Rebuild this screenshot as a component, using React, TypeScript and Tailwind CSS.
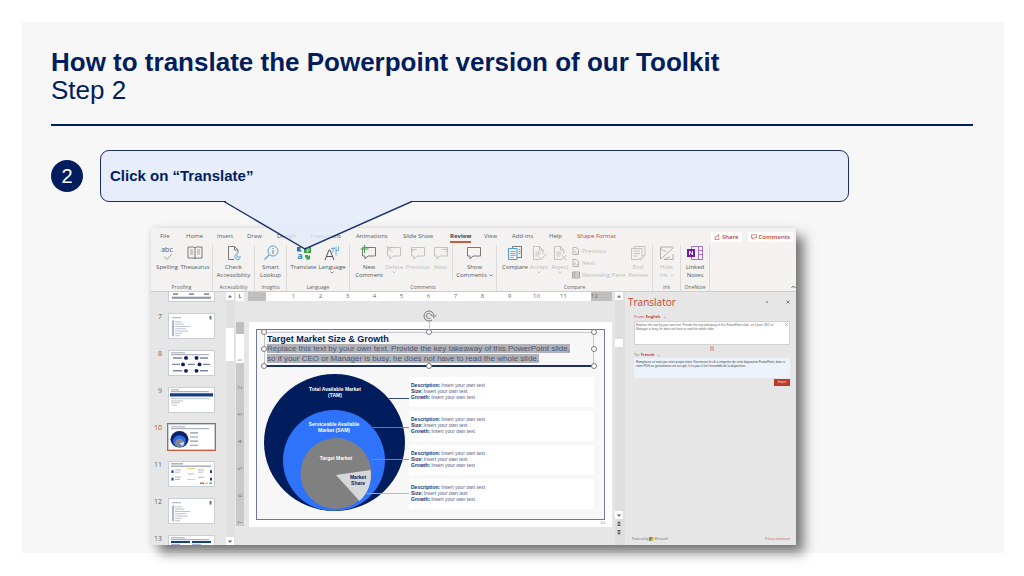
import type { ReactNode } from "react";

const grey = "#6b6b6b";
const faint = "#bdbdbd";

const Svg = ({ children, w = 16, h = 16 }: { children: ReactNode; w?: number; h?: number }) => (
  <svg width={w} height={h} viewBox={`0 0 ${w} ${h}`} fill="none" className="shrink-0 overflow-visible" aria-hidden="true">
    {children}
  </svg>
);

const SpellingIcon = () => (
  <Svg>
    <path d="M5 11.500l3 3 5-5.500" stroke="#9a9a9a" strokeWidth="0.9" />
    <text x="8" y="7" textAnchor="middle" fontSize="7" fill="#555" fontFamily="Open Sans, sans-serif">abc</text>
  </Svg>
);
const ThesaurusIcon = () => (
  <Svg>
    <path d="M1 2h6l1 1 1-1h6v11H9l-1 1-1-1H1z M8 3v11" stroke={grey} strokeWidth="0.9" />
    <path d="M3 5h3M3 7h3M3 9h3M10 5h3M10 7h3" stroke="#8a8a8a" strokeWidth="0.8" />
    <path d="M10 9h3" stroke="#d9826a" strokeWidth="0.8" />
  </Svg>
);
const CheckIcon = () => (
  <Svg>
    <path d="M8 14.500H2.500V1.500h6l3.500 3.500v3 M8.500 1.500V5H12" stroke={grey} strokeWidth="0.9" />
    <path d="M11 8v4h4 M9.500 9.500a3 3 0 1 0 4.500 4" stroke="#5aa7dd" strokeWidth="1" />
  </Svg>
);
const SmartIcon = () => (
  <Svg>
    <circle cx="10" cy="6" r="5" stroke="#5aa7dd" strokeWidth="1" />
    <path d="M6.500 9.500L1.500 14.500" stroke="#5aa7dd" strokeWidth="1.200" />
    <path d="M10 5v4M10 3v1" stroke={grey} strokeWidth="0.9" />
  </Svg>
);
const TranslateIcon = () => (
  <Svg>
    <path d="M1 2h4v1.500H3.500L6 6.500H1z" fill="#2b6fb5" />
    <text x="4" y="14" textAnchor="middle" fontSize="9" fontWeight="700" fill="#2b86c9" fontFamily="Open Sans, sans-serif">a</text>
    <path d="M8 2h7v6H8z" fill="#3b9e3f" />
    <path d="M9.500 4h4M11.500 3v3.500M10 6.500c2 0 3.500-1 3.500-2" stroke="#e2f2e0" strokeWidth="0.7" />
    <path d="M9 10h3v1.500l2-1.500v4.500H9.500l1.500-2H9z" fill="#3b9e3f" />
  </Svg>
);
const LanguageIcon = () => (
  <Svg>
    <path d="M1 15L5 5h1l4 10M2.500 11.500h6" stroke="#555" strokeWidth="1" />
    <path d="M7 3.500h4M9 2v4.500L7.500 8M12 1.500v9M12 5.500h2.500V1.500" stroke="#5aa7dd" strokeWidth="0.9" />
  </Svg>
);
const Bubble = ({ kind }: { kind: "new" | "delete" | "previous" | "next" | "show" }) => {
  const c = kind === "new" || kind === "show" ? grey : faint;
  return (
    <Svg>
      <path d="M1.500 2.500h13v8.500H7l-3 3v-3H1.500z" stroke={c} strokeWidth="0.9" />
      {kind === "new" && <path d="M3.500 0v8M-0.500 4h8" stroke="#4aa555" strokeWidth="1.200" />}
      {kind === "delete" && <path d="M0.500 1l6 6M6.500 1l-6 6" stroke={c} strokeWidth="0.9" />}
      {kind === "previous" && <path d="M7 4.500H1M3.500 2L1 4.500 3.500 7" stroke={c} strokeWidth="0.9" />}
      {kind === "next" && <path d="M9 4.500h6M12.500 2L15 4.500 12.500 7" stroke={c} strokeWidth="0.9" />}
    </Svg>
  );
};
const CompareIcon = () => (
  <Svg>
    <path d="M5.500 1.500h9v11h-9z" stroke={grey} strokeWidth="0.9" />
    <path d="M1.500 3.500h8.500v11H1.500z" fill="#f3f2f1" stroke="#4a9bd8" strokeWidth="1" />
    <path d="M3.500 6.500h5M3.500 8.500h5M3.500 10.500h5M3.500 12.500h3" stroke="#4a9bd8" strokeWidth="0.8" />
    <path d="M11.500 4.500h2M11.500 6.500h2M11.500 8.500h2" stroke={grey} strokeWidth="0.7" />
  </Svg>
);
const PageIcon = ({ mark }: { mark: string }) => (
  <Svg>
    <path d="M9 14.500H2.500V1.500h6l3.500 3.500v4M8.500 1.500V5H12M4.500 7h5M4.500 9h5M4.500 11h3" stroke={faint} strokeWidth="0.9" />
    <path d={mark} stroke={faint} strokeWidth="1" />
  </Svg>
);
const EndReviewIcon = () => (
  <Svg>
    <path d="M4 3V1.500h11v9h-2M1.500 3.500H12v8l-3 3H1.500zM3.500 6h6.500M3.500 8.500h6.500M3.500 11h4" stroke={faint} strokeWidth="0.9" />
    <path d="M9 13l2 2 3.500-4" stroke={faint} strokeWidth="0.9" />
  </Svg>
);
const InkIcon = () => (
  <Svg>
    <path d="M1.500 14V2h13M2 14L14 3M2 3c2 5 4 1 5 4M14 9v5.500H5c3-1 4-3 6-2" stroke="#a9a9a9" strokeWidth="0.9" />
  </Svg>
);
const OneNoteIcon = () => (
  <Svg w={18}>
    <path d="M5.500 1.500h11v13h-11zM12.500 1.500v13M12.500 5.500h4M12.500 9.500h4" stroke="#9a63c8" strokeWidth="0.9" />
    <rect x="1" y="4" width="8" height="8" fill="#7719aa" />
    <path d="M3.500 10V6l3 4V6" stroke="#fff" strokeWidth="1" />
  </Svg>
);

const Tool = ({ icon, lines, dim, drop }: { icon: ReactNode; lines: string[]; dim?: boolean; drop?: boolean }) => (
  <button
    className={`flex flex-col items-center whitespace-nowrap text-[6px] leading-[8px] ${dim ? "text-[#bcbcbc]" : "text-[#555]"}`}
  >
    {icon}
    <span className="mt-[2px]">{lines[0]}</span>
    <span className="flex items-center gap-[2px]">
      {lines[1]}
      {drop && (
        <svg width="4" height="3" viewBox="0 0 4 3" aria-hidden="true">
          <path d="M0.500 0.500l1.500 1.500 1.500-1.500" fill="none" stroke="currentColor" strokeWidth="0.7" />
        </svg>
      )}
    </span>
  </button>
);

const Group = ({ label, cols, children }: { label: string; cols: string; children: ReactNode }) => (
  <div className="flex flex-col justify-between border-r border-[#dcdad8]">
    <div className={`grid items-start ${cols}`}>{children}</div>
    <div className="text-center text-[5px] leading-[8px] whitespace-nowrap text-[#666]">{label}</div>
  </div>
);

const tabs = ["File", "Home", "Insert", "Draw", "Design", "Transitions", "Animations", "Slide Show", "Review", "View", "Add-ins", "Help", "Shape Format"];

const tabStyle = (t: string) =>
  t === "Review"
    ? "font-bold text-[#444] border-[#c75b3f]"
    : t === "Shape Format"
      ? "text-[#c2452d] border-transparent"
      : "text-[#5a5a5a] border-transparent";

const Ribbon = () => (
  <div className="border-b border-[#cfcdcb] bg-[#f3f2f1]">
    <div className="flex h-[17px] items-center justify-between pr-[3px]">
      <nav className="grid grid-cols-[26px_31px_30px_30px_33px_46px_47px_47px_34px_28px_37px_28px_50px] pl-[9px]">
        {tabs.map((t) => (
          <div key={t} className="flex">
            <button className={`border-b-2 pt-[2px] text-[6px] leading-[9px] whitespace-nowrap ${tabStyle(t)}`}>{t}</button>
          </div>
        ))}
      </nav>
      <div className="flex gap-[6px] text-[6px] leading-[10px] font-semibold text-[#b8432f]">
        <button className="flex items-center gap-[2px] rounded-[1px] bg-white px-[3px]">
          <svg width="6" height="6" viewBox="0 0 6 6" fill="none" stroke="currentColor" strokeWidth="0.6" aria-hidden="true">
            <path d="M1 2.500v3h4v-2M2 4c0-2 1-2.500 3-2.500M3.800 0.300L5.200 1.500 3.800 2.700" />
          </svg>
          Share
        </button>
        <button className="flex items-center gap-[2px] rounded-[1px] bg-white px-[3px]">
          <svg width="6" height="6" viewBox="0 0 6 6" fill="none" stroke="currentColor" strokeWidth="0.6" aria-hidden="true">
            <path d="M0.500 0.800h5v3h-2.500l-1.200 1.400v-1.400h-1.300z" />
          </svg>
          Comments
        </button>
      </div>
    </div>
    <div className="grid h-[46px] grid-cols-[62px_42px_32px_63px_147px_156px_28px_29px_1fr]">
      <Group label="Proofing" cols="grid-cols-[30px_26px] pl-[1px]">
        <Tool icon={<SpellingIcon />} lines={["Spelling"]} />
        <Tool icon={<ThesaurusIcon />} lines={["Thesaurus"]} />
      </Group>
      <Group label="Accessibility" cols="grid-cols-1">
        <Tool icon={<CheckIcon />} lines={["Check", "Accessibility"]} />
      </Group>
      <Group label="Insights" cols="grid-cols-1">
        <Tool icon={<SmartIcon />} lines={["Smart", "Lookup"]} />
      </Group>
      <Group label="Language" cols="grid-cols-[33px_24px]">
        <Tool icon={<TranslateIcon />} lines={["Translate"]} />
        <Tool icon={<LanguageIcon />} lines={["Language"]} drop />
      </Group>
      <Group label="Comments" cols="grid-cols-[26px_24px_23px_23px_44px] pl-[6px]">
        <Tool icon={<Bubble kind="new" />} lines={["New", "Comment"]} />
        <Tool icon={<Bubble kind="delete" />} lines={["Delete"]} dim drop />
        <Tool icon={<Bubble kind="previous" />} lines={["Previous"]} dim />
        <Tool icon={<Bubble kind="next" />} lines={["Next"]} dim />
        <div className="flex justify-center border-l border-[#dcdad8]">
          <Tool icon={<Bubble kind="show" />} lines={["Show", "Comments"]} drop />
        </div>
      </Group>
      <Group label="Compare" cols="grid-cols-[28px_20px_22px_55px_24px] pl-[4px]">
        <Tool icon={<CompareIcon />} lines={["Compare"]} />
        <Tool icon={<PageIcon mark="M8 12l2.500 2.500L15 9" />} lines={["Accept"]} dim drop />
        <Tool icon={<PageIcon mark="M9.500 10l5 5M14.500 10l-5 5" />} lines={["Reject"]} dim drop />
        <div className="flex flex-col pl-[1px] text-[6px] leading-[12px] whitespace-nowrap text-[#bcbcbc]">
          {["Previous", "Next", "Reviewing Pane"].map((t, i) => (
            <button key={t} className="flex items-center gap-[2px]">
              <Svg w={8} h={8}>
                {i < 2 ? (
                  <path d="M6.500 4V7.500H1V0.500h3l2.500 2V4M3 3.500v2.500M4.500 5l1.500 1.500" stroke="#a5a5a5" strokeWidth="0.8" />
                ) : (
                  <path d="M0.500 1h7v6h-7zM3 1v6M4 3h3M4 5h3M1 3h2M1 5h2" stroke="#8f8f8f" strokeWidth="0.8" />
                )}
              </Svg>
              {t}
            </button>
          ))}
        </div>
        <Tool icon={<EndReviewIcon />} lines={["End", "Review"]} dim />
      </Group>
      <Group label="Ink" cols="grid-cols-1">
        <Tool icon={<InkIcon />} lines={["Hide", "Ink"]} dim drop />
      </Group>
      <Group label="OneNote" cols="grid-cols-1">
        <Tool icon={<OneNoteIcon />} lines={["Linked", "Notes"]} />
      </Group>
      <div className="flex items-end justify-end pb-[2px]">
        <button aria-label="Collapse the ribbon">
          <svg width="5" height="4" viewBox="0 0 5 4" fill="none" className="block">
            <path d="M0.500 3l2-2 2 2" stroke="#555" strokeWidth="0.9" />
          </svg>
        </button>
      </div>
    </div>
  </div>
);

const Lines = () => (
  <>
    <path d="M3 4h9" stroke="#8b90a5" strokeWidth="0.8" />
    <path d="M41.500 2v4" stroke="#6d7286" strokeWidth="2" />
    <path d="M4 7v17" stroke="#6f83b8" strokeWidth="1.200" />
    <path d="M6 8.500h7M6 11h9M6 13.500h15M6 16h11M6 18.500h13M6 21h7M6 23.500h5" stroke="#9aa2b5" strokeWidth="0.7" />
  </>
);
const thumbArt: Record<number, ReactNode> = {
  6: <path d="M4 18.500h5M20 18.500h5M35 18.500h5M3 22.500h39" stroke="#8c93a0" strokeWidth="2" />,
  7: <Lines />,
  8: (
    <>
      <path d="M2 2h14M2 4h38" stroke="#7d8499" strokeWidth="0.8" />
      <path d="M4 7.500h9M31 7.500h8M3 14.500h8M19 14.500h7M34 14.500h7M4 21.500h9M31 21.500h8" stroke="#7c86a8" strokeWidth="1.600" />
      <g fill="#0b1f66">
        <circle cx="17" cy="7.500" r="2" />
        <circle cx="27.500" cy="7.500" r="2" />
        <circle cx="14" cy="14.500" r="2" />
        <circle cx="30.500" cy="14.500" r="2" />
        <circle cx="17" cy="21.500" r="2" />
        <circle cx="27.500" cy="21.500" r="2" />
      </g>
    </>
  ),
  9: (
    <>
      <path d="M2 2h8M2 4h38" stroke="#7d8499" strokeWidth="0.8" />
      <path d="M1 7.500h43" stroke="#123f85" strokeWidth="3.500" />
      <path d="M2 11.500h38M2 14h12M2 16h9M3 18.500h5" stroke="#9aa2b5" strokeWidth="0.7" />
    </>
  ),
  10: (
    <>
      <path d="M2 2h14M2 4h38" stroke="#7d8499" strokeWidth="0.8" />
      <circle cx="10.500" cy="15.500" r="9" fill="#0a2367" />
      <circle cx="10.500" cy="17.500" r="6.500" fill="#2e6be0" />
      <circle cx="10.500" cy="19.500" r="4.500" fill="#7f8896" />
      <path d="M10.500 19.500l4.500-1a4.500 4.500 0 0 1-1.500 4.500z" fill="#d9d9d9" />
      <path d="M21 8.500h8M21 13h8M21 17.500h8M21 22h8" stroke="#8c95b3" strokeWidth="1.200" />
    </>
  ),
  11: (
    <>
      <path d="M2 2h12M2 4.500h40" stroke="#7d8499" strokeWidth="1" />
      <path d="M18 7h8M18 19h8" stroke="#e6d77a" strokeWidth="1.200" />
      <path d="M6 8.500h6M6 11h5M29 8.500h6M29 11h5M6 16.500h6M29 16.500h6M19 13h6M6 19h5" stroke="#a7abb8" strokeWidth="0.9" />
      <path d="M3.500 9v3M42 9v3M3.500 17v3M42 17v3" stroke="#26397a" strokeWidth="2" />
      <path d="M31 23h4" stroke="#e0503c" strokeWidth="1.500" />
      <path d="M36 23h3" stroke="#f0c23a" strokeWidth="1.500" />
      <path d="M40 23h3" stroke="#5bb065" strokeWidth="1.500" />
    </>
  ),
  12: <Lines />,
  13: (
    <>
      <path d="M2 2h14M2 4h38" stroke="#7d8499" strokeWidth="0.8" />
      <path d="M2 6.500h19M23 6.500h19" stroke="#123f85" strokeWidth="2" />
      <path d="M2 9h9M23 9h9" stroke="#9aa2b5" strokeWidth="1" />
    </>
  ),
};

const Thumbnails = () => (
  <div className="overflow-hidden">
    <ol className="-mt-[17px] flex flex-col gap-[9px] pr-[9px] pl-[2px]">
      {[6, 7, 8, 9, 10, 11, 12, 13].map((n) => (
        <li key={n} className="grid grid-cols-[9px_49px] justify-between pr-[1px]">
          <span className={`pt-[1px] text-right text-[7px] leading-[8px] ${n === 10 ? "text-[#c2452d]" : "text-[#666]"}`}>
            {n > 6 && n}
          </span>
          <button
            aria-label={`Slide ${n}`}
            className={`border-2 ${n === 10 ? "border-[#c75b3f]" : "border-transparent"}`}
          >
            <svg width="45" height="24" viewBox="0 0 45 26" preserveAspectRatio="none" className="block bg-white outline outline-[#c9cdd6]">
              {thumbArt[n]}
            </svg>
          </button>
        </li>
      ))}
    </ol>
  </div>
);

const Arrow = ({ up, label }: { up?: boolean; label: string }) => (
  <button aria-label={label} className="flex h-[8px] w-[8px] items-center justify-center bg-white">
    <svg width="4" height="3" viewBox="0 0 4 3" className="block">
      <path d={up ? "M0 2.500h4L2 0z" : "M0 0.500h4L2 3z"} fill="#666" />
    </svg>
  </button>
);

const Handle = ({ at }: { at: string }) => (
  <span className={`absolute h-[6px] w-[6px] rounded-full border border-[#7c7c7c] bg-white ${at}`} />
);

const MarketChart = () => (
  <svg width="145" height="138" viewBox="0 0 145 138" className="block shrink-0" fontFamily="Liberation Sans, Arial, sans-serif" fontWeight="700" fontSize="5" textAnchor="middle">
    <ellipse cx="70.500" cy="68.500" rx="70.500" ry="68.500" fill="#011d5d" />
    <ellipse cx="70" cy="86.500" rx="51" ry="50.500" fill="#2e73fa" />
    <circle cx="72" cy="99.500" r="35.500" fill="#808080" />
    <path d="M72 101l34.500-5a36 36 0 0 1-11 31z" fill="#d6d7d9" />
    <path d="M125 24.500h20" stroke="#1d3570" strokeWidth="0.9" />
    <path d="M109 53.500h36" stroke="#4b86f8" strokeWidth="0.9" />
    <path d="M107 85.500h38" stroke="#8c8c8c" strokeWidth="0.9" />
    <path d="M103 119.500h42" stroke="#a9b4c9" strokeWidth="0.9" />
    <g fill="#fff">
      <text x="71" y="17">Total Available Market</text>
      <text x="71" y="23">(TAM)</text>
      <text x="70" y="52">Serviceable Available</text>
      <text x="70" y="58">Market (SAM)</text>
      <text x="72" y="85.500">Target Market</text>
    </g>
    <g fill="#011d5d">
      <text x="94" y="104.500">Market</text>
      <text x="94" y="110.500">Share</text>
    </g>
  </svg>
);

const SlideEditor = () => (
  <div className="flex flex-col">
    <div className="mr-[3px] ml-[3px] flex h-[9px] text-[6px] leading-[9px] text-[#666]">
      <div className="w-[18px] bg-[#bfbfbf]" />
      <div className="flex flex-1 bg-white pl-[14px] text-center">
        {[1, 2, 3, 4, 5, 6, 7, 8, 9, 10, 11].map((n) => (
          <span key={n} className="w-[27px]">{n}</span>
        ))}
      </div>
      <div className="w-[21px] bg-[#bfbfbf]">12</div>
    </div>
    <div className="mt-[21px] mr-[3px] ml-[4px] bg-white px-[7px] pt-[7px] font-['Liberation_Sans',Arial,sans-serif] text-[#1b2f6b]">
      <div className="border border-[#6f789e] bg-[#f7f7f7] pr-[10px] pb-[7px] pl-[7px]">
        <div className="relative mt-[2px] border border-b-2 border-[#c4c7cf] border-b-[#1b2f6b] pt-px pl-[2px]">
          <h2 className="text-[9px] leading-[10px] font-bold text-[#011d5d]">Target Market Size &amp; Growth</h2>
          <p className="pb-px text-[8px] leading-[10px] whitespace-nowrap text-[#4d5672]">
            <span className="bg-[#b0b2b8]">
              Replace this text by your own text. Provide the key takeaway of this PowerPoint slide,
              <br />
              so if your CEO or Manager is busy, he does not have to read the whole slide.
            </span>
          </p>
          <span className="absolute -top-[12px] left-1/2 h-[12px] w-px bg-[#c4c4c4]" />
          <svg width="14" height="12" viewBox="0 0 14 12" fill="none" stroke="#777" className="absolute -top-[23px] left-1/2 -ml-[6px]">
            <path d="M11 6a5 5 0 1 0-2 4M9 5.500l2.200 2L13.500 5M8.500 6a2.500 2.500 0 1 0-1 2" strokeWidth="1" />
          </svg>
          <Handle at="-top-[4px] -left-[4px]" />
          <Handle at="-top-[4px] left-1/2 -ml-[3px]" />
          <Handle at="-top-[4px] -right-[4px]" />
          <Handle at="top-[13px] -left-[4px]" />
          <Handle at="top-[13px] -right-[4px]" />
          <Handle at="-bottom-[4px] -left-[4px]" />
          <Handle at="-bottom-[4px] left-1/2 -ml-[3px]" />
          <Handle at="-bottom-[4px] -right-[4px]" />
        </div>
        <div className="mt-[7px] flex">
          <MarketChart />
          <div className="mt-[3px] flex flex-1 flex-col gap-[4px]">
            {[0, 1, 2, 3].map((i) => (
              <dl key={i} className="h-[30px] bg-white pt-[5px] pl-[2px] text-[5px] leading-[6px] whitespace-nowrap">
                {["Description:", "Size:", "Growth:"].map((k) => (
                  <div key={k} className="flex gap-px">
                    <dt className="font-bold text-[#1b2f6b]">{k}</dt>
                    <dd className="text-[#4a5888]">Insert your own text</dd>
                  </div>
                ))}
              </dl>
            ))}
          </div>
        </div>
      </div>
      <div className="h-[7px] text-right text-[4px] leading-[6px] text-[#999]">10</div>
    </div>
  </div>
);

const source =
  "Replace this text by your own text. Provide the key takeaway of this PowerPoint slide, so if your CEO or Manager is busy, he does not have to read the whole slide.";
const target =
  "Remplacez ce texte par votre propre texte. Fournissez le clé à emporter de cette diapositive PowerPoint, donc si votre PDG ou gestionnaire est occupé, il n'a pas à lire l'ensemble de la diapositive.";

const Translator = () => (
  <aside className="flex flex-col pr-[6px] pl-[3px]">
    <div className="flex items-center justify-between">
      <h2 className="text-[10px] leading-[20px] text-[#c2452d]">Translator</h2>
      <div className="flex gap-[17px] text-[#666]">
        <button aria-label="Pane options">
          <svg width="4" height="4" viewBox="0 0 4 4"><path d="M0.500 1.500h3L2 3z" fill="currentColor" /></svg>
        </button>
        <button aria-label="Close pane">
          <svg width="4" height="4" viewBox="0 0 4 4"><path d="M0.500 0.500l3 3M3.500 0.500l-3 3" stroke="currentColor" strokeWidth="0.8" /></svg>
        </button>
      </div>
    </div>
    <div className="flex flex-col pl-[6px] text-[4px] text-[#b8432f]">
      <div className="mt-[2px] flex h-[6px] items-center">
        <label htmlFor="from">From:</label>
        <select id="from" className="ml-px appearance-none font-bold"><option>English</option></select>
        <span className="ml-[2px]">⌄</span>
      </div>
      <div className="mt-px flex h-[24px] items-start border border-[#d2d2d2] bg-white">
        <textarea
          aria-label="Source text"
          defaultValue={source}
          className="block h-full flex-1 resize-none overflow-hidden px-px pt-px font-['Liberation_Sans',Arial,sans-serif] text-[3px] leading-[4px] text-[#666]"
        />
        <button aria-label="Clear source text" className="px-px pt-px text-[#777]">
          <svg width="3" height="3" viewBox="0 0 4 4" className="block"><path d="M0.500 0.500l3 3M3.500 0.500l-3 3" stroke="currentColor" strokeWidth="0.8" /></svg>
        </button>
      </div>
      <button aria-label="Swap languages" className="flex h-[7px] items-center justify-center">
        <svg width="4" height="5" viewBox="0 0 4 5" fill="none" stroke="currentColor" strokeWidth="0.6">
          <path d="M1 5V0.500L0 1.500M3 0v4.500l1-1" />
        </svg>
      </button>
      <div className="flex h-[6px] items-center">
        <label htmlFor="to">To:</label>
        <select id="to" className="ml-px appearance-none font-bold"><option>French</option></select>
        <span className="ml-[2px]">⌄</span>
      </div>
      <textarea
        aria-label="Translated text"
        defaultValue={target}
        className="block h-[20px] resize-none overflow-hidden bg-[#edf3fa] px-[2px] pt-[2px] font-['Liberation_Sans',Arial,sans-serif] text-[3px] leading-[4px] text-[#444]"
      />
      <button className="mt-px h-[7px] w-[16px] self-end bg-[#c0392b] text-center text-[3px] leading-[7px] text-white">Insert</button>
    </div>
    <footer className="mt-auto mb-[4px] flex items-center pl-[4px] text-[3px] leading-[4px] text-[#666]">
      Powered by
      <span className="mx-px grid h-[4px] w-[4px] grid-cols-2">
        <i className="bg-[#e8582c]" />
        <i className="bg-[#7fba00]" />
        <i className="bg-[#2b9fdc]" />
        <i className="bg-[#f5b800]" />
      </span>
      Microsoft
      <a href="#privacy" className="ml-auto text-[#c2605a]">Privacy statement</a>
    </footer>
  </aside>
);

const PowerPoint = () => (
  <div className="bg-[#e6e6e6] font-['Open_Sans','Noto_Sans',sans-serif] shadow-[8px_8px_11px_rgba(0,0,0,0.5),0_0_6px_rgba(0,0,0,0.1)]">
    <Ribbon />
    <div className="grid h-[253px] grid-cols-[75px_9px_10px_1fr_10px_171px]">
      <Thumbnails />
      <div className="flex flex-col justify-between bg-[#e0e0e0]">
        <Arrow up label="Scroll slides up" />
        <div className="mb-auto mt-[28px] h-[33px] w-[8px] bg-white" />
        <Arrow label="Scroll slides down" />
      </div>
      <div className="flex flex-col pl-px text-[5px] text-[#666]">
        <div className="h-[9px] w-[8px] bg-white text-center leading-[9px] font-bold">L</div>
        <div className="mt-[21px] h-[12px] w-[8px] bg-[#bfbfbf]" />
        <div className="flex h-[29px] w-[8px] items-end justify-center bg-white leading-[6px]">
          <span className="-rotate-90">1</span>
        </div>
        <div className="flex h-[163px] w-[8px] flex-col bg-[#c9c9c9] pt-[11px]">
          {[2, 3, 4, 5, 6, 7].map((n) => (
            <span key={n} className="flex h-[27px] items-start justify-center leading-[27px]">
              <span className="-rotate-90">{n}</span>
            </span>
          ))}
        </div>
      </div>
      <SlideEditor />
      <div className="flex flex-col items-start bg-[#dedede]">
        <Arrow up label="Previous position" />
        <div className="mt-[39px] h-[8px] w-[8px] bg-white" />
        <div className="mt-auto">
          <Arrow label="Next position" />
        </div>
        <div className="flex h-[26px] w-[8px] flex-col items-center gap-[4px] pt-[2px]">
          <svg width="4" height="5" viewBox="0 0 4 5"><path d="M0 2.500h4L2 0zM0 5h4L2 2.500z" fill="#666" /></svg>
          <svg width="4" height="5" viewBox="0 0 4 5"><path d="M0 0h4L2 2.500zM0 2.500h4L2 5z" fill="#666" /></svg>
        </div>
      </div>
      <Translator />
    </div>
  </div>
);

export default function App() {
  return (
    <div className="min-h-screen bg-white pt-[22px] pr-[20px] pb-[22px] pl-[22px] font-['Liberation_Sans',Arial,sans-serif]">
      <main className="bg-[#f7f7f7] pt-[26px] pb-[8px] pl-[29px]">
        <header className="mr-[31px] border-b-2 border-[#011d5d] pb-[20px] text-[26px] leading-[28px] text-[#011d5d]">
          <h1 className="font-bold">How to translate the Powerpoint version of our Toolkit</h1>
          <p>Step 2</p>
        </header>
        <div className="mt-[24px] mr-[155px] flex items-center gap-[17px]">
          <div className="flex h-[32px] w-[32px] items-center justify-center rounded-full bg-[#011d5d] text-[20px] text-white">2</div>
          <div className="relative z-10 flex h-[52px] flex-1 items-center rounded-[9px] border border-[#1b2f6b] bg-[#e8edfc] pl-[9px] text-[15px] font-bold text-[#011d5d]">
            Click on “Translate”
            <svg width="188" height="50" viewBox="0 0 188 50" fill="none" className="absolute top-[49px] left-[123px]">
              <path d="M1 2L81 49 187 2z" fill="#e3eafb" fillOpacity="0.8" />
              <path d="M0 1.500L81 49 188 1.500" stroke="#1b2f6b" strokeWidth="1.400" />
              <path d="M2 0h184v2H2z" fill="#e8edfc" />
            </svg>
          </div>
        </div>
        <div className="mt-[26px] mr-[208px] ml-[100px]">
          <PowerPoint />
        </div>
      </main>
    </div>
  );
}
